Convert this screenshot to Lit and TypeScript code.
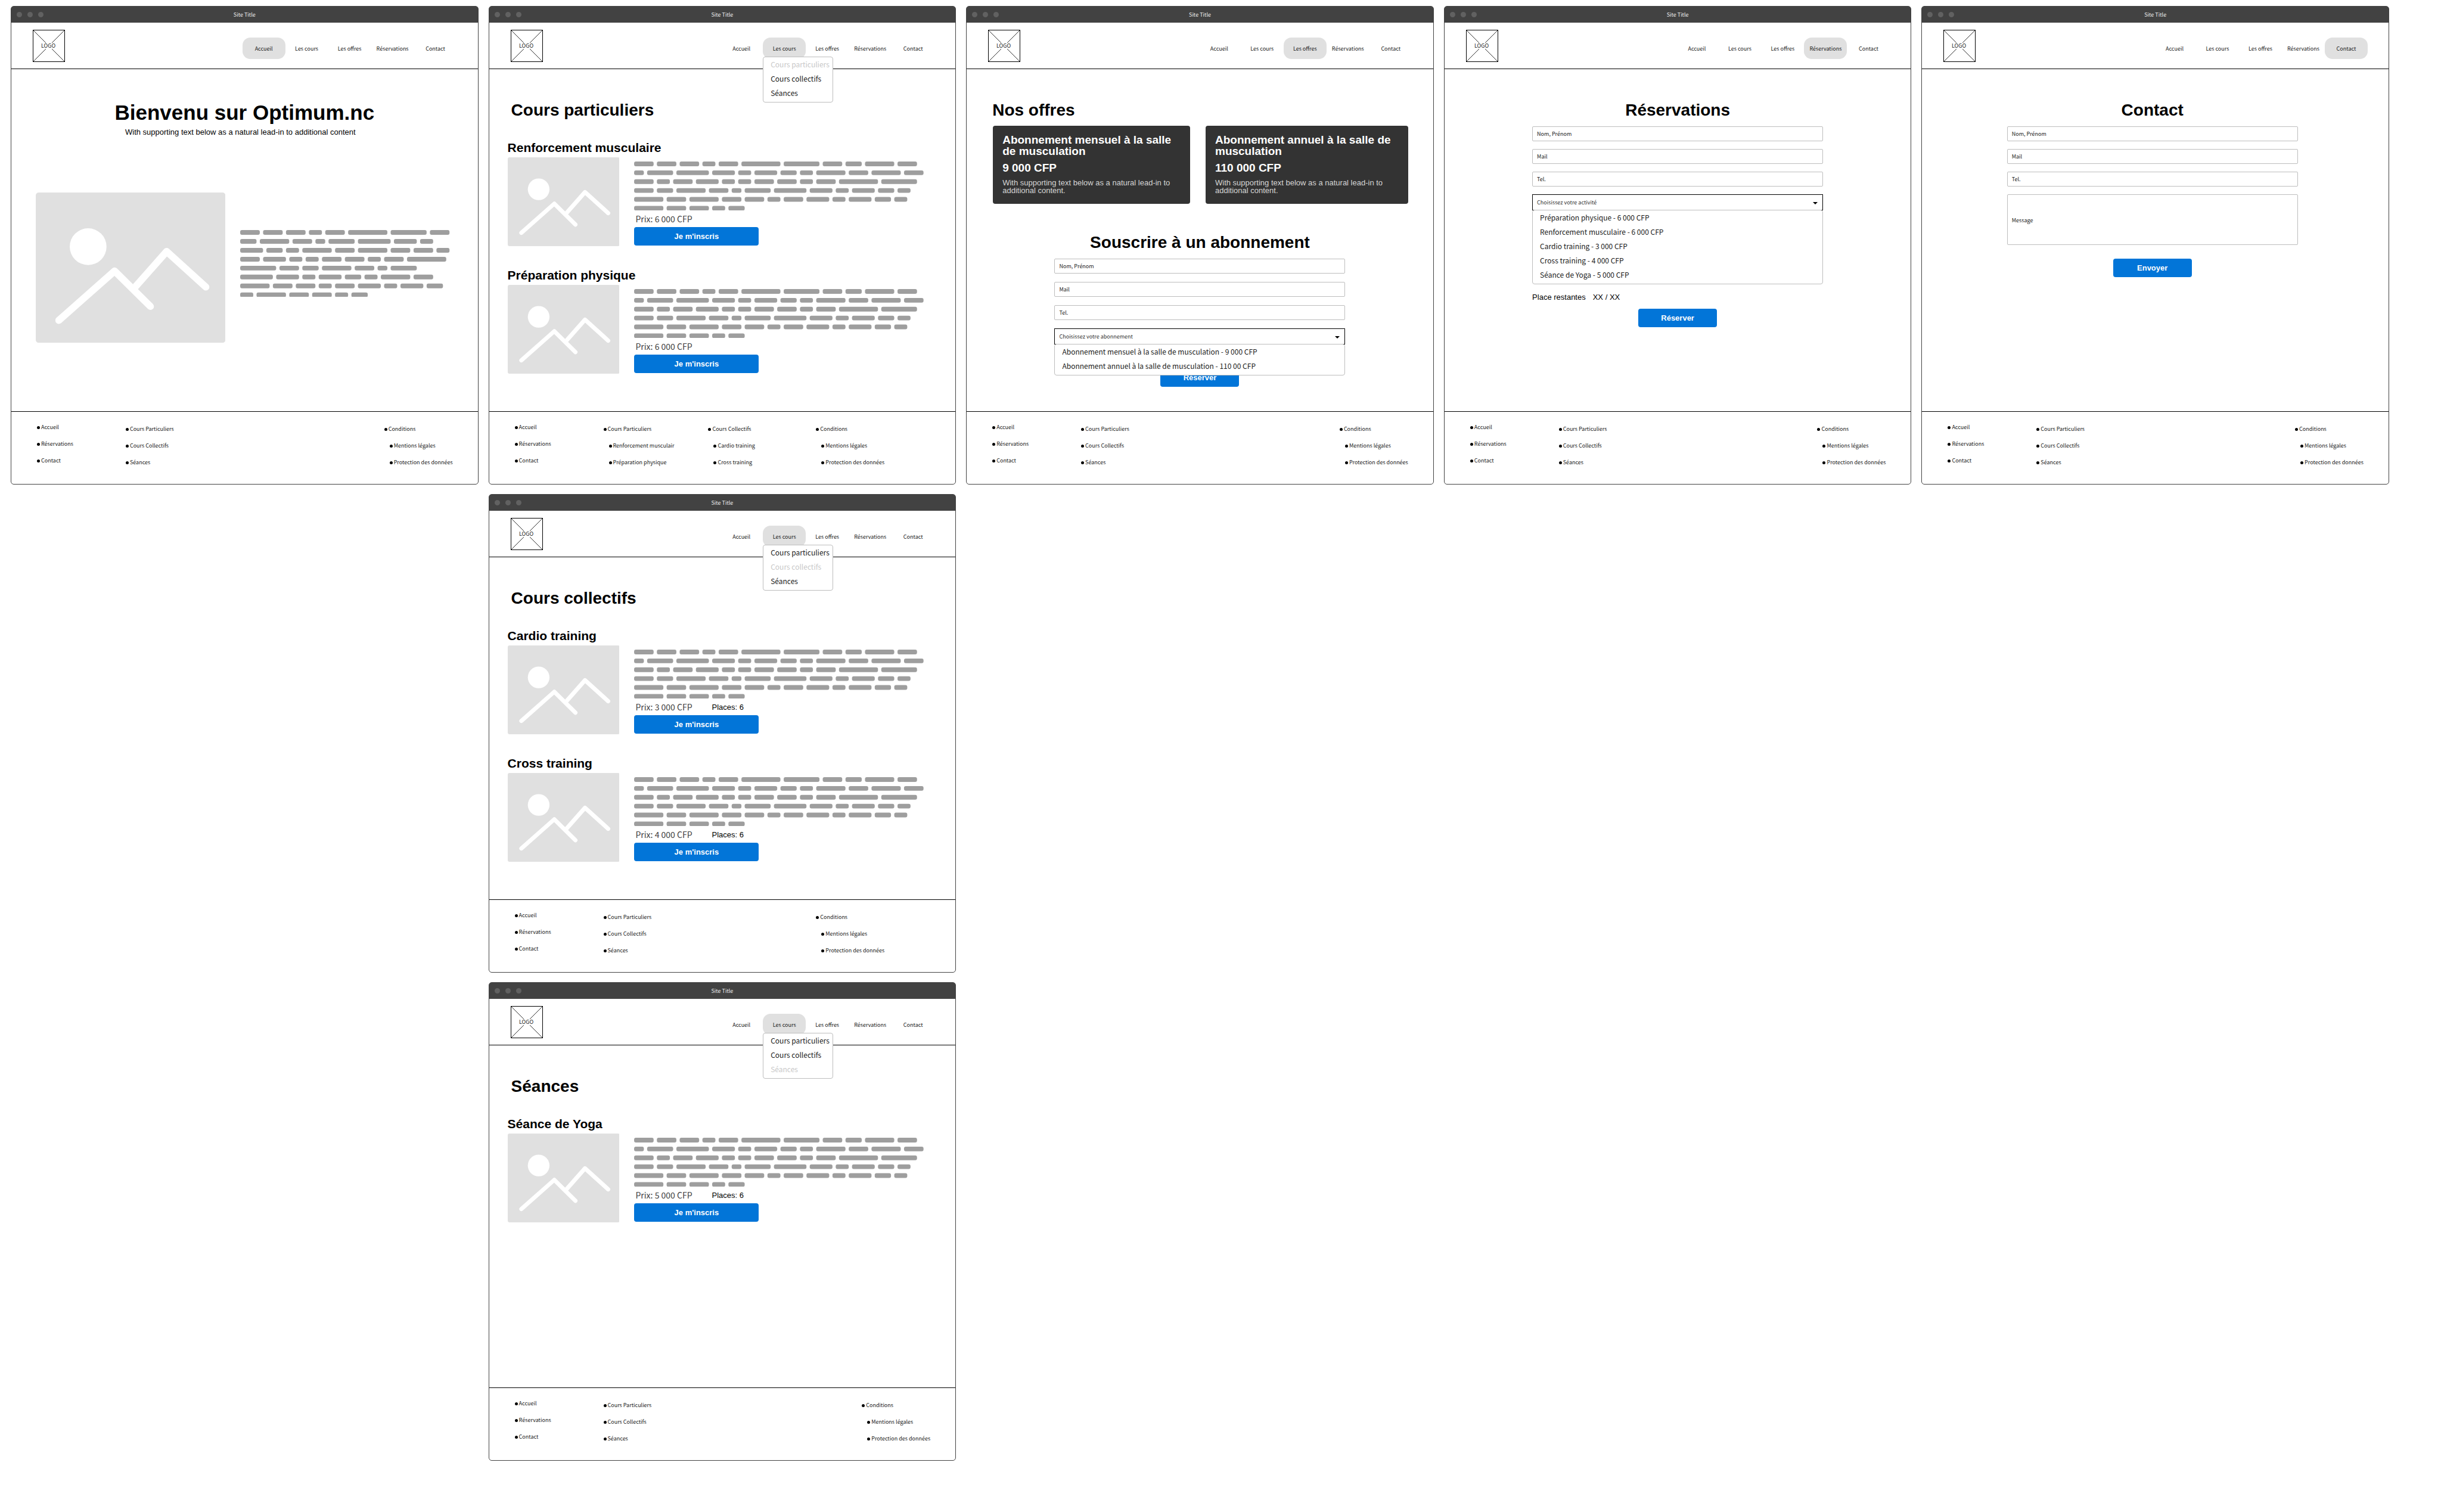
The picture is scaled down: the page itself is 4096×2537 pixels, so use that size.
import { LitElement, html, svg, css, nothing } from "lit";
import { customElement, property } from "lit/decorators.js";
import { classMap } from "lit/directives/class-map.js";

/* ---------- data ---------- */

interface FooterColumn {
  items: string[];
  nested?: boolean;
}

interface Course {
  title: string;
  price: string;
  places?: string;
}

const NAV = ["Accueil", "Les cours", "Les offres", "Réservations", "Contact"];
const COURSE_MENU = ["Cours particuliers", "Cours collectifs", "Séances"];

const SITE: FooterColumn = { items: ["Accueil", "Réservations", "Contact"] };
const COURSES: FooterColumn = { items: ["Cours Particuliers", "Cours Collectifs", "Séances"] };
const LEGAL: FooterColumn = {
  items: ["Conditions", "Mentions légales", "Protection des données"],
  nested: true,
};
const PRIVATE: FooterColumn = {
  items: ["Cours Particuliers", "Renforcement musculair", "Préparation physique"],
  nested: true,
};
const GROUP: FooterColumn = {
  items: ["Cours Collectifs", "Cardio training", "Cross training"],
  nested: true,
};

/* Word lengths, in characters, of each greeked line. */
const NARROW_TEXT = [
  [6, 6, 6, 4, 6, 12, 11, 6],
  [5, 9, 6, 3, 8, 10, 7, 4],
  [7, 5, 4, 9, 6, 9, 6, 6, 4],
  [6, 7, 4, 4, 6, 6, 4, 6, 12],
  [11, 6, 5, 9, 6, 3, 8],
  [10, 7, 4, 7, 5, 4, 9, 6],
  [9, 6, 6, 4, 6, 7, 4, 7, 5],
  [4, 9, 6, 6, 4, 5],
];
const WIDE_TEXT = [
  [6, 6, 6, 4, 6, 12, 11, 6, 5, 9, 6],
  [3, 8, 10, 7, 4, 7, 5, 4, 9, 6, 9, 6],
  [6, 4, 6, 7, 4, 4, 6, 6, 4, 6, 12, 11],
  [6, 5, 9, 6, 3, 8, 10, 7, 4, 7, 5, 4],
  [9, 6, 9, 6, 6, 4, 6, 7, 4, 7, 5, 4],
  [9, 6, 6, 4, 5],
];

/* ---------- drawings ---------- */

const CHAR = 11;
const LINE = 30;
const BAR = 16;

function greeked(lines: number[][]) {
  const measure = (line: number[]) => line.reduce((sum, n) => sum + n + 1, -1);
  const width = Math.max(...lines.map(measure)) * CHAR;
  const height = (lines.length - 1) * LINE + BAR;
  return html`<svg class="greeked" viewBox="0 0 ${width} ${height}" aria-hidden="true">
    ${lines.map((line, row) => {
      let at = 0;
      return line.map((n) => {
        const x = at * CHAR;
        at += n + 1;
        return svg`<rect x=${x} y=${row * LINE} width=${n * CHAR} height=${BAR} rx="6" fill="#9e9e9e"></rect>`;
      });
    })}
  </svg>`;
}

const picture = html`<svg class="picture" viewBox="0 0 318 252" role="img" aria-label="Image">
  <rect width="318" height="252" rx="5" fill="#e0e0e0"></rect>
  <circle cx="87.8" cy="90.8" r="30.8" fill="#fff"></circle>
  <g fill="none" stroke="#fff" stroke-width="11.8" stroke-linecap="round" stroke-linejoin="round">
    <path d="M38.7 214.3 132.2 131.6 192.2 191"></path>
    <path d="M164 161.5 219.4 98.9 285.2 158.4"></path>
  </g>
</svg>`;

const logo = html`<svg class="logo" viewBox="0 0 54 54" role="img" aria-label="Logo">
  <rect x="0.5" y="0.5" width="53" height="53" fill="#fff" stroke="#000"></rect>
  <path d="M1 1 53 53M53 1 1 53" stroke="#000" stroke-width="0.8"></path>
  <circle cx="27" cy="27" r="7.4" fill="#fff"></circle>
  <text class="logo-text" x="26" y="30" text-anchor="middle">LOGO</text>
</svg>`;

/* ---------- shared styles ---------- */

const base = css`
  * {
    box-sizing: border-box;
  }
  h1,
  h2,
  p,
  ul,
  button,
  input,
  textarea,
  select {
    margin: 0;
    padding: 0;
  }
  ul {
    list-style: none;
  }
  a {
    color: inherit;
    text-decoration: none;
  }
  svg {
    display: block;
  }
  h1,
  h2 {
    font-size: 28px;
    line-height: 28px;
    font-weight: 700;
  }
  button,
  input,
  textarea,
  select {
    font: inherit;
    color: inherit;
    border: 0;
    border-radius: 0;
    background: none;
  }
  .ui {
    font-family: "Noto Sans CJK SC", "Noto Sans", sans-serif;
    color: #1a1a1a;
  }
  .menu {
    border: 1px solid #bdbdbd;
    border-radius: 4px;
    background: #fff;
    padding: 0 0 3px 12px;
    font-size: 12px;
    line-height: 24px;
    white-space: nowrap;
  }
  .menu .off {
    color: #c8c8c8;
  }
  .action {
    height: 31px;
    border-radius: 4px;
    background: #0275d8;
    color: #fff;
    font-size: 13px;
    line-height: 31px;
    font-weight: 700;
    text-align: center;
  }
  .greeked {
    width: 100%;
  }
  .picture {
    width: 100%;
  }
`;

/* ---------- window frame ---------- */

@customElement("site-window")
export class SiteWindow extends LitElement {
  @property() current = "";
  @property() submenu = "";
  @property() layout = "spread";
  @property({ attribute: false }) columns: FooterColumn[] = [SITE, COURSES, LEGAL];

  static styles = [
    base,
    css`
      :host {
        display: flex;
        flex-direction: column;
        border: 1px solid #424242;
        border-radius: 5px;
        background: #fff;
        min-width: 0;
      }
      .titlebar {
        display: grid;
        grid-template-columns: 1fr auto 1fr;
        align-items: center;
        height: 27px;
        padding: 0 9px;
        border-radius: 3px 3px 0 0;
        background: #424242;
      }
      .titlebar .name {
        color: #eee;
        font-size: 9px;
        line-height: 12px;
      }
      .dots {
        display: flex;
        gap: 9px;
      }
      .dot {
        width: 9px;
        height: 9px;
        border-radius: 50%;
        background: #616161;
      }
      .header {
        display: flex;
        justify-content: space-between;
        align-items: flex-start;
        padding: 12px 35px 11px 36px;
        border-bottom: 1px solid #000;
      }
      .logo {
        width: 54px;
        height: 54px;
      }
      .logo-text {
        font-family: "Noto Sans CJK SC", "Noto Sans", sans-serif;
        font-size: 9px;
        fill: #1a1a1a;
      }
      .nav {
        display: flex;
        padding-top: 13px;
        font-size: 9px;
        line-height: 34px;
        text-align: center;
      }
      .entry {
        position: relative;
        width: 72px;
      }
      .entry > a {
        display: block;
        padding-top: 2px;
      }
      .entry.current > a {
        border-radius: 13px;
        background: #e0e0e0;
      }
      .entry .menu {
        position: absolute;
        top: 32px;
        left: 0;
        width: 118px;
        text-align: left;
      }
      .content {
        flex: 1 0 auto;
        min-height: 574px;
        padding-top: 55px;
      }
      .footer {
        display: grid;
        min-height: 122px;
        padding: 12px 0 0 43px;
        border-top: 1px solid #000;
        font-size: 9px;
        line-height: 28px;
        white-space: nowrap;
      }
      .footer.spread {
        grid-template-columns: 149fr 434fr 157fr;
      }
      .footer.near {
        grid-template-columns: 149fr 357fr 234fr;
      }
      .footer.four {
        grid-template-columns: 149fr 176fr 181fr 234fr;
      }
      .group + .group {
        padding-top: 3px;
      }
      .group li {
        display: flex;
        align-items: center;
        gap: 2px;
      }
      .group li::before {
        content: "";
        width: 5px;
        height: 5px;
        border-radius: 50%;
        background: #000;
      }
      .group.nested li + li {
        padding-left: 9px;
      }
    `,
  ];

  render() {
    return html`
      <div class="titlebar ui">
        <div class="dots"><i class="dot"></i><i class="dot"></i><i class="dot"></i></div>
        <span class="name">Site Title</span>
      </div>
      <header class="header ui">
        <a href="#" aria-label="Logo">${logo}</a>
        <nav>
          <ul class="nav">
            ${NAV.map(
              (name) => html`<li class=${classMap({ entry: true, current: name === this.current })}>
                <a href="#">${name}</a>
                ${this.submenu && name === this.current
                  ? html`<ul class="menu">
                      ${COURSE_MENU.map(
                        (item) => html`<li>
                          <a class=${item === this.submenu ? "off" : ""} href="#">${item}</a>
                        </li>`
                      )}
                    </ul>`
                  : nothing}
              </li>`
            )}
          </ul>
        </nav>
      </header>
      <main class="content"><slot></slot></main>
      <footer class="footer ui ${this.layout}">
        ${this.columns.map(
          (column) => html`<ul class=${classMap({ group: true, nested: !!column.nested })}>
            ${column.items.map((item) => html`<li><a href="#">${item}</a></li>`)}
          </ul>`
        )}
      </footer>
    `;
  }
}

/* ---------- pages ---------- */

@customElement("home-page")
export class HomePage extends LitElement {
  static styles = [
    base,
    css`
      :host {
        display: block;
      }
      .welcome {
        font-size: 35px;
        line-height: 35px;
        text-align: center;
      }
      .lead {
        padding: 9px 14px 0 0;
        font-size: 13px;
        line-height: 13px;
        text-align: center;
      }
      .intro {
        display: grid;
        grid-template-columns: 318fr 351fr;
        align-items: center;
        gap: 25px;
        padding: 95px 47px 0 41px;
      }
      .greeked {
        padding-bottom: 14px;
        box-sizing: content-box;
      }
    `,
  ];

  render() {
    return html`
      <h1 class="welcome">Bienvenu sur Optimum.nc</h1>
      <p class="lead">With supporting text below as a natural lead-in to additional content</p>
      <div class="intro">${picture}${greeked(NARROW_TEXT)}</div>
    `;
  }
}

@customElement("course-page")
export class CoursePage extends LitElement {
  @property() heading = "";
  @property({ attribute: false }) courses: Course[] = [];

  static styles = [
    base,
    css`
      :host {
        display: flex;
        flex-direction: column;
        gap: 38px;
        padding: 0 53px 0 31px;
      }
      .title {
        padding-left: 6px;
      }
      .course h2 {
        padding-bottom: 6px;
        font-size: 21px;
        line-height: 21px;
        box-sizing: content-box;
      }
      .row {
        display: grid;
        grid-template-columns: 188fr 486fr;
        gap: 25px;
      }
      .details {
        padding-top: 7px;
      }
      .facts {
        display: flex;
        align-items: center;
        gap: 33px;
        height: 28px;
        padding-left: 2px;
      }
      .price {
        color: #424242;
        font-size: 14px;
        line-height: 20px;
      }
      .places {
        font-size: 13px;
        line-height: 13px;
      }
      .action {
        width: 43%;
      }
    `,
  ];

  render() {
    return html`
      <h1 class="title">${this.heading}</h1>
      ${this.courses.map(
        (course) => html`<section class="course">
          <h2>${course.title}</h2>
          <div class="row">
            ${picture}
            <div class="details">
              ${greeked(WIDE_TEXT)}
              <div class="facts">
                <span class="ui price">Prix: ${course.price}</span>
                ${course.places ? html`<span class="places">Places: ${course.places}</span>` : nothing}
              </div>
              <button class="action" type="button">Je m'inscris</button>
            </div>
          </div>
        </section>`
      )}
    `;
  }
}

@customElement("request-form")
export class RequestForm extends LitElement {
  @property() choice = "";
  @property({ attribute: false }) options: string[] = [];
  @property({ type: Boolean }) overlay = false;
  @property({ type: Boolean }) message = false;
  @property({ type: Boolean }) seats = false;
  @property() action = "";

  static styles = [
    base,
    css`
      :host {
        display: block;
        width: 488px;
        max-width: 100%;
        margin: 13px auto 0;
      }
      .form {
        display: flex;
        flex-direction: column;
        gap: 13px;
      }
      .form.overlaid {
        gap: 14px;
      }
      .field {
        height: 25px;
        padding: 0 7px;
        border: 1px solid #bdbdbd;
        border-radius: 2px;
        font-size: 9px;
        line-height: 12px;
      }
      .field::placeholder {
        color: #1a1a1a;
        opacity: 1;
      }
      .area {
        height: 85px;
        padding-top: 37px;
        resize: none;
      }
      .picker {
        position: relative;
      }
      .select {
        display: block;
        width: 100%;
        height: 27px;
        padding: 0 7px;
        border: 1px solid #000;
        appearance: none;
        color: #333;
        font-size: 9px;
      }
      .caret {
        position: absolute;
        top: 13px;
        right: 9px;
        width: 8px;
        height: 4px;
        pointer-events: none;
      }
      .options {
        margin-top: -1px;
      }
      .overlaid .options {
        position: absolute;
        top: 100%;
        left: 0;
        right: 0;
      }
      .seats {
        display: flex;
        gap: 12px;
        padding-top: 2px;
        font-size: 13px;
        line-height: 13px;
      }
      .action {
        align-self: center;
        width: 132px;
      }
      .overlaid .action {
        margin-top: 26px;
      }
      .area + .action {
        margin-top: 10px;
      }
    `,
  ];

  render() {
    return html`
      <form class=${classMap({ form: true, overlaid: this.overlay })}>
        <input class="field ui" type="text" placeholder="Nom, Prénom" aria-label="Nom, Prénom" />
        <input class="field ui" type="email" placeholder="Mail" aria-label="Mail" />
        <input class="field ui" type="tel" placeholder="Tel." aria-label="Tel." />
        ${this.message
          ? html`<textarea class="field area ui" placeholder="Message" aria-label="Message"></textarea>`
          : nothing}
        ${this.choice
          ? html`<div class="picker">
              <select class="select ui" aria-label=${this.choice}>
                <option>${this.choice}</option>
              </select>
              <svg class="caret" viewBox="0 0 8 4" aria-hidden="true"><path d="M0 0h8L4 4z"></path></svg>
              <ul class="menu options ui" role="listbox" aria-label=${this.choice}>
                ${this.options.map((option) => html`<li role="option">${option}</li>`)}
              </ul>
            </div>`
          : nothing}
        ${this.seats
          ? html`<p class="seats"><span>Place restantes</span><span>XX / XX</span></p>`
          : nothing}
        <button class="action" type="button">${this.action}</button>
      </form>
    `;
  }
}

@customElement("offers-page")
export class OffersPage extends LitElement {
  static styles = [
    base,
    css`
      :host {
        display: block;
      }
      .title {
        padding-left: 43px;
      }
      .cards {
        display: grid;
        grid-template-columns: 331fr 340fr;
        gap: 26px;
        padding: 12px 42px 0 44px;
      }
      .card {
        display: flex;
        flex-direction: column;
        gap: 9px;
        min-height: 131px;
        padding: 14px 16px;
        border-radius: 4px;
        background: #333;
        color: #fff;
        font-size: 19px;
        line-height: 19px;
        font-weight: 700;
      }
      .card h2 {
        font-size: 19px;
        line-height: 19px;
      }
      .card .note {
        color: #d6d6d6;
        font-size: 13px;
        line-height: 13px;
        font-weight: 400;
      }
      .subscribe {
        padding-top: 51px;
        box-sizing: content-box;
        text-align: center;
      }
    `,
  ];

  private card(title: string, price: string) {
    return html`<article class="card">
      <h2>${title}</h2>
      <p>${price}</p>
      <p class="note">With supporting text below as a natural lead-in to additional content.</p>
    </article>`;
  }

  render() {
    return html`
      <h1 class="title">Nos offres</h1>
      <div class="cards">
        ${this.card("Abonnement mensuel à la salle de musculation", "9 000 CFP")}
        ${this.card("Abonnement annuel à la salle de musculation", "110 000 CFP")}
      </div>
      <h2 class="subscribe">Souscrire à un abonnement</h2>
      <request-form
        overlay
        choice="Choisissez votre abonnement"
        .options=${[
          "Abonnement mensuel à la salle de musculation - 9 000 CFP",
          "Abonnement annuel à la salle de musculation - 110 00 CFP",
        ]}
        action="Réserver"
      ></request-form>
    `;
  }
}

/* ---------- board ---------- */

@customElement("app-root")
export class AppRoot extends LitElement {
  static styles = [
    base,
    css`
      :host {
        display: block;
        color: #000;
        background: #fff;
        font-family: "Liberation Sans", Arial, sans-serif;
      }
      .board {
        display: grid;
        grid-template-columns: repeat(5, minmax(0, 1fr));
        gap: 16px 17px;
        padding: 10px 87px 86px 18px;
      }
      .under-courses {
        grid-column: 2;
      }
      .heading {
        text-align: center;
      }
      .contact {
        padding-right: 10px;
      }
    `,
  ];

  render() {
    return html`
      <div class="board">
        <site-window current="Accueil"><home-page></home-page></site-window>

        <site-window
          current="Les cours"
          submenu="Cours particuliers"
          layout="four"
          .columns=${[SITE, PRIVATE, GROUP, LEGAL]}
        >
          <course-page
            heading="Cours particuliers"
            .courses=${[
              { title: "Renforcement musculaire", price: "6 000 CFP" },
              { title: "Préparation physique", price: "6 000 CFP" },
            ]}
          ></course-page>
        </site-window>

        <site-window current="Les offres"><offers-page></offers-page></site-window>

        <site-window current="Réservations">
          <h1 class="heading">Réservations</h1>
          <request-form
            seats
            choice="Choisissez votre activité"
            .options=${[
              "Préparation physique - 6 000 CFP",
              "Renforcement musculaire - 6 000 CFP",
              "Cardio training - 3 000 CFP",
              "Cross training - 4 000 CFP",
              "Séance de Yoga - 5 000 CFP",
            ]}
            action="Réserver"
          ></request-form>
        </site-window>

        <site-window current="Contact">
          <div class="contact">
            <h1 class="heading">Contact</h1>
            <request-form message action="Envoyer"></request-form>
          </div>
        </site-window>

        <site-window class="under-courses" current="Les cours" submenu="Cours collectifs" layout="near">
          <course-page
            heading="Cours collectifs"
            .courses=${[
              { title: "Cardio training", price: "3 000 CFP", places: "6" },
              { title: "Cross training", price: "4 000 CFP", places: "6" },
            ]}
          ></course-page>
        </site-window>

        <site-window class="under-courses" current="Les cours" submenu="Séances">
          <course-page
            heading="Séances"
            .courses=${[{ title: "Séance de Yoga", price: "5 000 CFP", places: "6" }]}
          ></course-page>
        </site-window>
      </div>
    `;
  }
}
